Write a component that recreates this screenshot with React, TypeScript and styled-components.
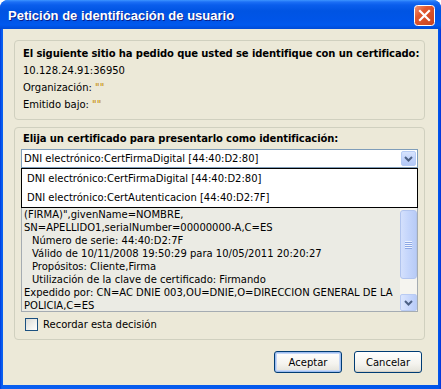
import React from 'react'
import styled, { createGlobalStyle } from 'styled-components'

const GlobalStyle = createGlobalStyle`
  html, body {
    margin: 0;
    padding: 0;
    background: #ffffff;
  }
  body {
    font-family: "DejaVu Sans", Verdana, sans-serif;
    font-size: 10px;
    color: #000000;
  }
`

const Window = styled.div`
  width: 441px;
  height: 389px;
  display: flex;
  flex-direction: column;
  border-radius: 8px 8px 0 0;
  overflow: hidden;
  background: linear-gradient(to right, #0831D9 0px, #0055EA 1px, #0A5FF0 2px, #0055EA 439px, #0831D9 441px);
`

const TitleBar = styled.div`
  height: 29px;
  flex: none;
  display: flex;
  align-items: center;
  justify-content: space-between;
  padding: 0 6px 0 8px;
  background: linear-gradient(
    to bottom,
    #3D95FF 0px,
    #1C6FF5 2px,
    #0A5EEC 5px,
    #0054E3 11px,
    #0055E8 20px,
    #0059EE 25px,
    #004BD6 29px
  );
`

const TitleText = styled.div`
  font-family: "Liberation Sans", Arial, sans-serif;
  font-weight: bold;
  font-size: 13px;
  color: #ffffff;
  text-shadow: 1px 1px 0 #0A1F8A;
  padding-top: 1px;
`

const CloseButton = styled.div`
  width: 21px;
  height: 21px;
  display: flex;
  margin-top: 1px;
`

const Body = styled.div`
  flex: 1;
  margin: 0 3px 4px 3px;
  background: #ECE9D8;
  padding: 11px 13px 0 11px;
  display: flex;
  flex-direction: column;
`

const GroupBox = styled.div<{ $height: number }>`
  height: ${(p) => p.$height}px;
  box-sizing: border-box;
  border: 1px solid #D0D0BF;
  border-radius: 4px;
  display: flex;
  flex-direction: column;
`

const InfoBox = styled(GroupBox)`
  padding: 4px 8px 0 8px;
`

const ChooseBox = styled(GroupBox)`
  margin-top: 7px;
  padding: 2px 6px 0 6px;
`

const TextLine = styled.div<{ $bold?: boolean }>`
  line-height: 17px;
  height: 17px;
  font-weight: ${(p) => (p.$bold ? 'bold' : 'normal')};
  letter-spacing: ${(p) => (p.$bold ? '-0.1px' : 'normal')};
  white-space: nowrap;
`

const Legend = styled(TextLine)`
  padding-left: 2px;
`

const Quote = styled.span`
  color: #C48A00;
`

const ComboWrap = styled.div`
  position: relative;
  margin-top: 2px;
  z-index: 2;
`

const Combo = styled.div`
  height: 19px;
  box-sizing: border-box;
  border: 1px solid #7F9DB9;
  background: #ffffff;
  display: flex;
  align-items: center;
  justify-content: space-between;
  padding: 0 1px 0 2px;
`

const ComboText = styled.span`
  line-height: 17px;
`

const ComboArrow = styled.div`
  width: 15px;
  height: 15px;
  box-sizing: border-box;
  border: 1px solid #B7CCF5;
  border-radius: 2px;
  background: linear-gradient(to bottom, #D8E4FD 0%, #C3D4FB 50%, #B4C9F7 100%);
  display: flex;
  align-items: center;
  justify-content: center;
`

const DropList = styled.div`
  position: absolute;
  top: 100%;
  left: 0;
  right: 0;
  height: 40px;
  box-sizing: border-box;
  border: 1px solid #000000;
  background: #ffffff;
  display: flex;
  flex-direction: column;
`

const DropItem = styled.div`
  height: 19px;
  line-height: 19px;
  padding-left: 5px;
  white-space: nowrap;
`

const Details = styled.div`
  margin-top: 2px;
  height: 142px;
  box-sizing: border-box;
  border: 1px solid #A5ACB2;
  background: #EBEBE4;
  display: flex;
`

// scrolled: the lines above "(FIRMA)" sit under the open list
const DetailsText = styled.div`
  flex: 1;
  overflow: hidden;
  padding: 37px 0 0 2px;
`

const DetailLine = styled.div<{ $indent?: boolean }>`
  line-height: 13px;
  height: 13px;
  white-space: nowrap;
  padding-left: ${(p) => (p.$indent ? 8 : 0)}px;
`

const ScrollBar = styled.div`
  width: 17px;
  flex: none;
  display: flex;
  flex-direction: column;
  background: #F4F3EE;
`

const ScrollButton = styled.div`
  height: 17px;
  flex: none;
  box-sizing: border-box;
  border: 1px solid #B9CBF3;
  border-radius: 2px;
  background: linear-gradient(to right, #DCE6FD 0%, #C6D6FC 60%, #B9CCF8 100%);
  display: flex;
  align-items: center;
  justify-content: center;
`

const ScrollTrack = styled.div`
  flex: 1;
  display: flex;
  flex-direction: column;
  padding-top: 22px;
  background: #F5F4EF;
`

const ScrollThumb = styled.div`
  height: 69px;
  box-sizing: border-box;
  border: 1px solid #B1C4EE;
  border-radius: 3px;
  background: linear-gradient(to right, #D4E0FC 0%, #C4D5FB 50%, #B8CBF6 100%);
  display: flex;
  align-items: center;
  justify-content: center;
`

const Grip = styled.div`
  width: 7px;
  display: flex;
  flex-direction: column;
  gap: 1px;
`

const GripLine = styled.div`
  height: 1px;
  background: #EEF3FE;
  box-shadow: 0 1px 0 #8CA7E4;
`

const CheckRow = styled.div`
  margin-top: 6px;
  display: flex;
  align-items: center;
  gap: 5px;
  padding-left: 4px;
`

const CheckBox = styled.div`
  width: 13px;
  height: 13px;
  box-sizing: border-box;
  border: 1px solid #1C5180;
  background: linear-gradient(135deg, #DCDCD7 0%, #F2F2EE 60%, #FFFFFF 100%);
`

const ButtonRow = styled.div`
  margin-top: 11px;
  display: flex;
  justify-content: flex-end;
  gap: 12px;
  padding-right: 3px;
`

const Button = styled.div<{ $default?: boolean }>`
  width: 68px;
  height: 22px;
  box-sizing: border-box;
  border: 1px solid #003C74;
  border-radius: 3px;
  background: linear-gradient(to bottom, #FFFFFF 0%, #F4F3EE 60%, #E3E2DA 100%);
  box-shadow: ${(p) => (p.$default ? 'inset 0 0 0 1px #9DBDF0, inset 0 0 0 2px #C5D7F7' : 'inset 0 -1px 0 #D6D0C5')};
  display: flex;
  align-items: center;
  justify-content: center;
`

const Chevron = () => (
  <svg width="9" height="6" viewBox="0 0 9 6">
    <path d="M1 1 L4.5 4.5 L8 1" fill="none" stroke="#4D6185" strokeWidth="2" />
  </svg>
)

const CloseIcon = () => (
  <svg width="21" height="21" viewBox="0 0 21 21">
    <defs>
      <linearGradient id="closeBg" x1="0" y1="0" x2="1" y2="1">
        <stop offset="0" stopColor="#F19A7E" />
        <stop offset="0.35" stopColor="#E2582F" />
        <stop offset="1" stopColor="#C6421E" />
      </linearGradient>
    </defs>
    <rect x="0.5" y="0.5" width="20" height="20" rx="3" fill="url(#closeBg)" stroke="#ffffff" />
    <path d="M6 6 L15 15 M15 6 L6 15" stroke="#ffffff" strokeWidth="2.2" strokeLinecap="square" />
  </svg>
)

const details: { text: string; indent?: boolean }[] = [
  { text: '(FIRMA)",givenName=NOMBRE,' },
  { text: 'SN=APELLIDO1,serialNumber=00000000-A,C=ES' },
  { text: 'Número de serie: 44:40:D2:7F', indent: true },
  { text: 'Válido de 10/11/2008 19:50:29 para 10/05/2011 20:20:27', indent: true },
  { text: 'Propósitos: Cliente,Firma', indent: true },
  { text: 'Utilización de la clave de certificado: Firmando', indent: true },
  { text: 'Expedido por: CN=AC DNIE 003,OU=DNIE,O=DIRECCION GENERAL DE LA' },
  { text: 'POLICIA,C=ES' },
]

const certs = [
  'DNI electrónico:CertFirmaDigital [44:40:D2:80]',
  'DNI electrónico:CertAutenticacion [44:40:D2:7F]',
]

export default function App() {
  return (
    <>
      <GlobalStyle />
      <Window>
        <TitleBar>
          <TitleText>Petición de identificación de usuario</TitleText>
          <CloseButton>
            <CloseIcon />
          </CloseButton>
        </TitleBar>
        <Body>
          <InfoBox $height={80}>
            <TextLine $bold>El siguiente sitio ha pedido que usted se identifique con un certificado:</TextLine>
            <TextLine>10.128.24.91:36950</TextLine>
            <TextLine>
              Organización: <Quote>""</Quote>
            </TextLine>
            <TextLine>
              Emitido bajo: <Quote>""</Quote>
            </TextLine>
          </InfoBox>
          <ChooseBox $height={213}>
            <Legend $bold>Elija un certificado para presentarlo como identificación:</Legend>
            <ComboWrap>
              <Combo>
                <ComboText>{certs[0]}</ComboText>
                <ComboArrow>
                  <Chevron />
                </ComboArrow>
              </Combo>
              <DropList>
                {certs.map((c) => (
                  <DropItem key={c}>{c}</DropItem>
                ))}
              </DropList>
            </ComboWrap>
            <Details>
              <DetailsText>
                {details.map((d, i) => (
                  <DetailLine key={i} $indent={d.indent}>
                    {d.text}
                  </DetailLine>
                ))}
              </DetailsText>
              <ScrollBar>
                <ScrollButton />
                <ScrollTrack>
                  <ScrollThumb>
                    <Grip>
                      <GripLine />
                      <GripLine />
                      <GripLine />
                      <GripLine />
                    </Grip>
                  </ScrollThumb>
                </ScrollTrack>
                <ScrollButton>
                  <Chevron />
                </ScrollButton>
              </ScrollBar>
            </Details>
            <CheckRow>
              <CheckBox />
              <span>Recordar esta decisión</span>
            </CheckRow>
          </ChooseBox>
          <ButtonRow>
            <Button $default>Aceptar</Button>
            <Button>Cancelar</Button>
          </ButtonRow>
        </Body>
      </Window>
    </>
  )
}
